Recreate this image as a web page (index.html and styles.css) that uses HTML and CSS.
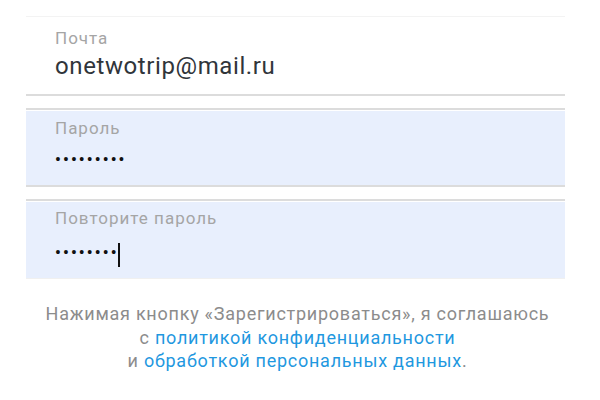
FILE: index.html
```html
<!DOCTYPE html>
<html lang="ru">
<head>
<meta charset="utf-8">
<link rel="stylesheet" href="styles.css">
</head>
<body>
<div class="form">
  <div class="field field-plain">
    <div class="field-inner">
      <div class="label">Почта</div>
      <div class="value">onetwotrip@mail.ru</div>
    </div>
  </div>
  <div class="field field-filled">
    <div class="field-inner">
      <div class="label">Пароль</div>
      <div class="dots">•••••••••</div>
    </div>
  </div>
  <div class="field field-filled field-last">
    <div class="field-inner">
      <div class="label">Повторите пароль</div>
      <div class="dots">••••••••<span class="caret"></span></div>
    </div>
  </div>
  <p class="terms">Нажимая кнопку «Зарегистрироваться», я соглашаюсь<br>с <a href="#">политикой конфиденциальности</a><br>и <a href="#">обработкой персональных данных</a>.</p>
</div>
</body>
</html>
```
FILE: styles.css
```css
html, body {
  margin: 0;
  padding: 0;
  background: #ffffff;
}
body {
  font-family: Roboto, "Liberation Sans", Arial, sans-serif;
  width: 600px;
  height: 400px;
  overflow: hidden;
}
.form {
  padding: 16px 35px 0 26px;
}
.field {
  border-bottom: 2px solid #dcdcdc;
}
.field-plain {
  border-top: 1px solid #f3f3f3;
}
.field-filled {
  margin-top: 12px;
  border-top: 2px solid #dcdcdc;
  padding-top: 1px;
}
.field-last {
  border-bottom: 1px solid #f0f0f0;
}
.field-inner {
  padding: 0 29px;
  box-sizing: border-box;
}
.field-plain .field-inner {
  height: 77px;
  padding-top: 11px;
}
.field-filled .field-inner {
  background: #e8effd;
  height: 74px;
  padding-top: 7px;
}
.field-last .field-inner {
  height: 76px;
  padding-top: 6px;
}
.label {
  font-size: 17px;
  letter-spacing: 1px;
  line-height: 20px;
  color: #a5a5a5;
}
.value {
  font-size: 24px;
  letter-spacing: 0.6px;
  line-height: 28px;
  color: #30353a;
  margin-top: 4px;
}
.dots {
  font-size: 16px;
  font-weight: 700;
  letter-spacing: 2.2px;
  color: #111;
  line-height: 24px;
  height: 24px;
  margin-top: 10px;
  display: flex;
  align-items: center;
}
.field-last .dots {
  margin-top: 13px;
}
.caret {
  display: inline-block;
  width: 2px;
  height: 24px;
  background: #111;
  margin-left: -1px;
  position: relative;
  top: 2px;
}
.terms {
  margin: 23px 0 0;
  text-align: center;
  font-size: 18px;
  letter-spacing: 0.75px;
  line-height: 23.5px;
  color: #8c8c8c;
  padding-left: 4px;
}
.terms a {
  color: #1f98e0;
  text-decoration: none;
}
```
